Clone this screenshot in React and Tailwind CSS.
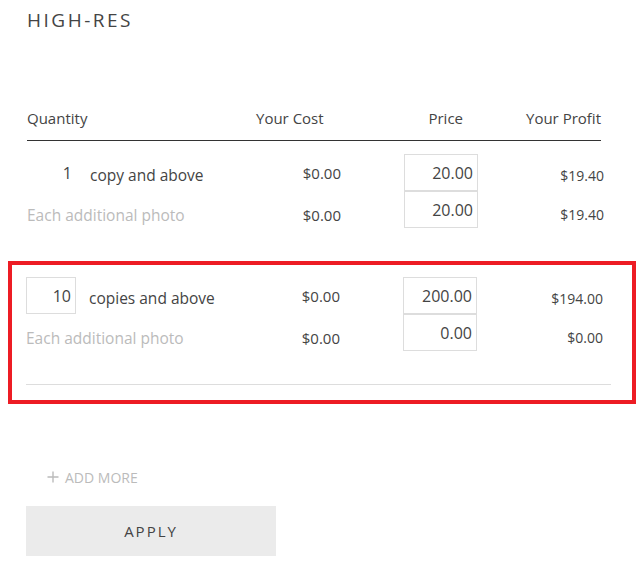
import React from 'react';

const cols = "grid grid-cols-[230px_84px_137px_126px] items-center";

const PriceInput = ({ value }) => (
  <div className="flex justify-end">
    <input
      defaultValue={value}
      className="w-[74px] h-[37px] border border-[#dddddd] text-right pr-[4px] text-[16px] text-[#444] outline-none bg-white"
    />
  </div>
);

const TierRows = ({ qty, label, price, profit, addPrice, addProfit, editable }) => (
  <div>
    {/* main row */}
    <div className={`${cols} h-[37px]`}>
      <div className="flex items-center">
        <input
          defaultValue={qty}
          className={`w-[50px] h-[37px] text-right pr-[4px] text-[16px] text-[#444] outline-none bg-white ${editable ? "border border-[#dddddd]" : "border border-transparent"}`}
        />
        <span className="ml-[13px] text-[15.5px] text-[#444] translate-y-[3px]">{label}</span>
      </div>
      <div className="text-right text-[15px] text-[#444] translate-y-[1px]">$0.00</div>
      <PriceInput value={price} />
      <div className="text-right text-[14px] text-[#444] translate-y-[3px]">{profit}</div>
    </div>
    {/* additional photo row */}
    <div className={`${cols} h-[37px]`}>
      <div className="text-[15.5px] text-[#bbbbbb] translate-y-[6px] whitespace-nowrap">Each additional photo</div>
      <div className="text-right text-[15px] text-[#444] translate-y-[6px]">$0.00</div>
      <PriceInput value={addPrice} />
      <div className="text-right text-[14px] text-[#444] translate-y-[5px]">{addProfit}</div>
    </div>
  </div>
);

export default function App() {
  return (
    <div className="w-[643px] h-[573px] bg-white pl-[27px] pt-[8px] font-['Open_Sans',sans-serif] text-[#444]">
      <h2 className="text-[19px] leading-[24px] tracking-[2.5px] text-[#444]">HIGH-RES</h2>

      {/* HEADER */}
      <div className="grid grid-cols-[230px_84px_137px_123px] items-center w-[574px] mt-[76px] pb-[12px] border-b border-[#333] text-[15px] leading-[20px]">
        <div>Quantity</div>
        <div className="-ml-px whitespace-nowrap">Your Cost</div>
        <div className="text-right pr-[15px]">Price</div>
        <div className="text-right">Your Profit</div>
      </div>

      <div className="mt-[13px]">
        <TierRows qty="1" label="copy and above" price="20.00" profit="$19.40" addPrice="20.00" addProfit="$19.40" />
      </div>

      {/* SECOND TIER (highlighted) */}
      <div className="ml-[-19px] mt-[33px] w-[628px] border-4 border-[#ed1c24] pl-[14px] pr-[21px] pt-[12px] pb-[15px]">
        <TierRows qty="10" label="copies and above" price="200.00" profit="$194.00" addPrice="0.00" addProfit="$0.00" editable />
        <div className="mt-[33px] border-t border-[#dddddd]"></div>
      </div>

      <div className="ml-[20px] mt-[64px] flex items-center leading-[20px] text-[#bbbbbb]">
        <svg width="12" height="12" viewBox="0 0 12 12" className="-mt-[3px]">
          <path d="M6 0.5V11.5M0.5 6H11.5" stroke="#bbbbbb" strokeWidth="1.4" fill="none" />
        </svg>
        <span className="ml-[6px] text-[14px] uppercase">Add more</span>
      </div>

      <button className="mt-[18px] w-[250px] h-[50px] bg-[#ebebeb] text-[15px] tracking-[2px] text-[#444] -ml-px">
        APPLY
      </button>
    </div>
  );
}
